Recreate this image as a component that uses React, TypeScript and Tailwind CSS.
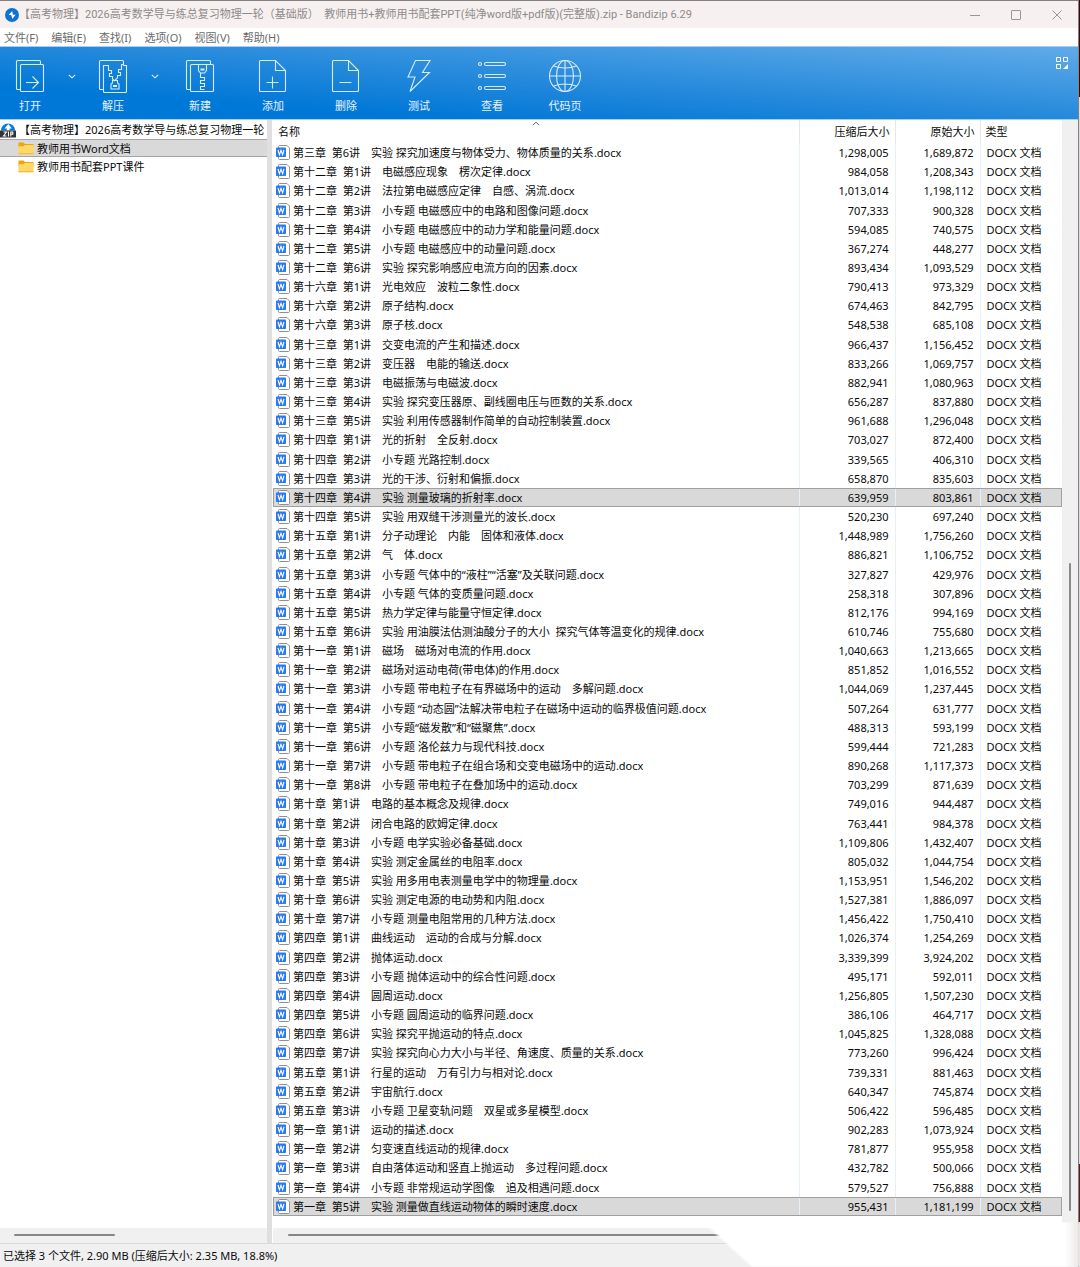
import React from "react";
import type { ReactNode } from "react";

type FileRow = [string, string, string];

const files: FileRow[] = [
  ["第三章  第6讲　实验 探究加速度与物体受力、物体质量的关系", "1,298,005", "1,689,872"],
  ["第十二章  第1讲　电磁感应现象　楞次定律", "984,058", "1,208,343"],
  ["第十二章  第2讲　法拉第电磁感应定律　自感、涡流", "1,013,014", "1,198,112"],
  ["第十二章  第3讲　小专题 电磁感应中的电路和图像问题", "707,333", "900,328"],
  ["第十二章  第4讲　小专题 电磁感应中的动力学和能量问题", "594,085", "740,575"],
  ["第十二章  第5讲　小专题 电磁感应中的动量问题", "367,274", "448,277"],
  ["第十二章  第6讲　实验 探究影响感应电流方向的因素", "893,434", "1,093,529"],
  ["第十六章  第1讲　光电效应　波粒二象性", "790,413", "973,329"],
  ["第十六章  第2讲　原子结构", "674,463", "842,795"],
  ["第十六章  第3讲　原子核", "548,538", "685,108"],
  ["第十三章  第1讲　交变电流的产生和描述", "966,437", "1,156,452"],
  ["第十三章  第2讲　变压器　电能的输送", "833,266", "1,069,757"],
  ["第十三章  第3讲　电磁振荡与电磁波", "882,941", "1,080,963"],
  ["第十三章  第4讲　实验 探究变压器原、副线圈电压与匝数的关系", "656,287", "837,880"],
  ["第十三章  第5讲　实验 利用传感器制作简单的自动控制装置", "961,688", "1,296,048"],
  ["第十四章  第1讲　光的折射　全反射", "703,027", "872,400"],
  ["第十四章  第2讲　小专题 光路控制", "339,565", "406,310"],
  ["第十四章  第3讲　光的干涉、衍射和偏振", "658,870", "835,603"],
  ["第十四章  第4讲　实验 测量玻璃的折射率", "639,959", "803,861"],
  ["第十四章  第5讲　实验 用双缝干涉测量光的波长", "520,230", "697,240"],
  ["第十五章  第1讲　分子动理论　内能　固体和液体", "1,448,989", "1,756,260"],
  ["第十五章  第2讲　气　体", "886,821", "1,106,752"],
  ["第十五章  第3讲　小专题 气体中的“液柱”“活塞”及关联问题", "327,827", "429,976"],
  ["第十五章  第4讲　小专题 气体的变质量问题", "258,318", "307,896"],
  ["第十五章  第5讲　热力学定律与能量守恒定律", "812,176", "994,169"],
  ["第十五章  第6讲　实验 用油膜法估测油酸分子的大小  探究气体等温变化的规律", "610,746", "755,680"],
  ["第十一章  第1讲　磁场　磁场对电流的作用", "1,040,663", "1,213,665"],
  ["第十一章  第2讲　磁场对运动电荷(带电体)的作用", "851,852", "1,016,552"],
  ["第十一章  第3讲　小专题 带电粒子在有界磁场中的运动　多解问题", "1,044,069", "1,237,445"],
  ["第十一章  第4讲　小专题 “动态圆”法解决带电粒子在磁场中运动的临界极值问题", "507,264", "631,777"],
  ["第十一章  第5讲　小专题“磁发散”和“磁聚焦”", "488,313", "593,199"],
  ["第十一章  第6讲　小专题 洛伦兹力与现代科技", "599,444", "721,283"],
  ["第十一章  第7讲　小专题 带电粒子在组合场和交变电磁场中的运动", "890,268", "1,117,373"],
  ["第十一章  第8讲　小专题 带电粒子在叠加场中的运动", "703,299", "871,639"],
  ["第十章  第1讲　电路的基本概念及规律", "749,016", "944,487"],
  ["第十章  第2讲　闭合电路的欧姆定律", "763,441", "984,378"],
  ["第十章  第3讲　小专题 电学实验必备基础", "1,109,806", "1,432,407"],
  ["第十章  第4讲　实验 测定金属丝的电阻率", "805,032", "1,044,754"],
  ["第十章  第5讲　实验 用多用电表测量电学中的物理量", "1,153,951", "1,546,202"],
  ["第十章  第6讲　实验 测定电源的电动势和内阻", "1,527,381", "1,886,097"],
  ["第十章  第7讲　小专题 测量电阻常用的几种方法", "1,456,422", "1,750,410"],
  ["第四章  第1讲　曲线运动　运动的合成与分解", "1,026,374", "1,254,269"],
  ["第四章  第2讲　抛体运动", "3,339,399", "3,924,202"],
  ["第四章  第3讲　小专题 抛体运动中的综合性问题", "495,171", "592,011"],
  ["第四章  第4讲　圆周运动", "1,256,805", "1,507,230"],
  ["第四章  第5讲　小专题 圆周运动的临界问题", "386,106", "464,717"],
  ["第四章  第6讲　实验 探究平抛运动的特点", "1,045,825", "1,328,088"],
  ["第四章  第7讲　实验 探究向心力大小与半径、角速度、质量的关系", "773,260", "996,424"],
  ["第五章  第1讲　行星的运动　万有引力与相对论", "739,331", "881,463"],
  ["第五章  第2讲　宇宙航行", "640,347", "745,874"],
  ["第五章  第3讲　小专题 卫星变轨问题　双星或多星模型", "506,422", "596,485"],
  ["第一章  第1讲　运动的描述", "902,283", "1,073,924"],
  ["第一章  第2讲　匀变速直线运动的规律", "781,877", "955,958"],
  ["第一章  第3讲　自由落体运动和竖直上抛运动　多过程问题", "432,782", "500,066"],
  ["第一章  第4讲　小专题 非常规运动学图像　追及相遇问题", "579,527", "756,888"],
  ["第一章  第5讲　实验 测量做直线运动物体的瞬时速度", "955,431", "1,181,199"],
];

const selectedRows = [18, 55];

function AppIcon() {
  return (
    <svg className="size-[14px] shrink-0" viewBox="0 0 14 14" aria-hidden="true">
      <circle cx="7" cy="7" r="7" fill="#0c73d3" />
      <path d="M7.200 3 3.600 7h2.600l1.200 4 3.200-4.200H7.900z" fill="#fff" />
    </svg>
  );
}

function ZipIcon() {
  return (
    <svg className="h-[16px] w-[16px] shrink-0" viewBox="0 0 16 16" aria-hidden="true">
      <path d="M1 8.500a7 7 0 1 1 14 0z" fill="#0c78da" />
      <path d="m8.400 2-4 4.400h2.400v2h2.800v-2h2.200z" fill="#fff" />
      <rect y="8.500" width="16" height="7" fill="#333" />
      <path d="M3.500 10h3l-3 4h3M8.500 9.600v4.800M10.800 14.400V10h2v2.200h-2" fill="none" stroke="#fff" strokeWidth="1.1" />
    </svg>
  );
}

function FolderIcon() {
  return (
    <svg className="h-[13px] w-[16px] shrink-0" viewBox="0 0 16 13" aria-hidden="true">
      <path d="M1.200.5h4.300L7 2h7.600c.6 0 1 .4 1 1v3H.4V1.500c0-.6.3-1 .8-1z" fill="#eba70f" />
      <path d="M.4 4.200h5L6.800 3h7.800c.6 0 1 .4 1 1v7.200c0 .6-.4 1-1 1H1.400c-.6 0-1-.4-1-1z" fill="#ffd867" />
      <path d="M.4 11v.4c0 .5.4.9 1 .9h13.200c.6 0 1-.4 1-.9V11z" fill="#f5bf3b" />
    </svg>
  );
}

function WordIcon() {
  return (
    <svg className="h-[15px] w-[14px] shrink-0" viewBox="0 0 14 15" aria-hidden="true">
      <path d="M2.500 1.500c0-.6.4-1 1-1h7.500l2.500 2.500v10.500c0 .6-.4 1-1 1h-9c-.6 0-1-.4-1-1z" fill="#fff" stroke="#909090" />
      <rect x="0" y="2.500" width="10" height="9.500" rx=".8" fill="#2b79ee" />
      <path d="m2 4.800 1.400 5L5 5.400l1.600 4.400 1.400-5" fill="none" stroke="#fff" strokeWidth="1.1" />
    </svg>
  );
}

function Glyph({ children }: { children: ReactNode }) {
  return (
    <svg className="size-[34px]" viewBox="0 0 34 34" fill="none" stroke="#d8ebfb" strokeWidth="1.1" aria-hidden="true">
      {children}
    </svg>
  );
}

const stackedPages = (
  <>
    <path d="M7.500 30.500H4.500a1 1 0 0 1-1-1v-27a1 1 0 0 1 1-1h22a1 1 0 0 1 1 1v2.500" />
    <rect x="7.500" y="5.500" width="23" height="27" rx="1" />
  </>
);

const tools: { label: string; group: string; arrow?: boolean; icon: ReactNode }[] = [
  {
    label: "打开",
    group: "flex w-[83px]",
    arrow: true,
    icon: (
      <>
        {stackedPages}
        <path d="M13 23.500h12M19.500 17.500l6 6-6 6" />
      </>
    ),
  },
  {
    label: "解压",
    group: "flex w-[87px]",
    arrow: true,
    icon: (
      <>
        <path d="M7.500 30.500H4.500a1 1 0 0 1-1-1v-27a1 1 0 0 1 1-1h22a1 1 0 0 1 1 1v4h3v26a1 1 0 0 1-1 1h-21a1 1 0 0 1-1-1v-26h5v5h3v3h-2v3h3v2.500l2.500 2" />
        <path d="M27.500 5.500h-2v5h-3v3h2v3h-3v2.500l-2.500 2" />
        <path d="M16.500 21.500h5v2.500l1.500 1v5h-8v-5l1.500-1zM17.500 26.500h3v1h-3z" />
      </>
    ),
  },
  {
    label: "新建",
    group: "flex w-[73px]",
    icon: (
      <>
        {stackedPages}
        <path d="M15.500 5.500v6l2 2.500h4l2-2.500v-6M18 10h3v1h-3z" />
        <path d="M17.500 14v4.500h4v3h-4v3h4v3h-4v3h4" />
      </>
    ),
  },
  {
    label: "添加",
    group: "flex w-[73px]",
    icon: (
      <>
        <path d="M4.500 1.500h15l10 10v20a1 1 0 0 1-1 1h-24a1 1 0 0 1-1-1v-29a1 1 0 0 1 1-1z" />
        <path d="M19.500 1.500v10h10M16.500 17.500v12M10.500 23.500h12" />
      </>
    ),
  },
  {
    label: "删除",
    group: "flex w-[73px]",
    icon: (
      <>
        <path d="M4.500 1.500h15l10 10v20a1 1 0 0 1-1 1h-24a1 1 0 0 1-1-1v-29a1 1 0 0 1 1-1z" />
        <path d="M19.500 1.500v10h10M10.500 23.500h12" />
      </>
    ),
  },
  {
    label: "测试",
    group: "flex w-[73px]",
    icon: <path d="M13.500 1.500h14.500l-7.500 12h7L8 32.500l5-14.500H6z" />,
  },
  {
    label: "查看",
    group: "flex w-[73px]",
    icon: (
      <>
        <circle cx="5" cy="5" r="1.500" />
        <circle cx="5" cy="17" r="1.500" />
        <circle cx="5" cy="29" r="1.500" />
        <rect x="9.500" y="3.500" width="21" height="3" rx="1.500" />
        <rect x="9.500" y="15.500" width="21" height="3" rx="1.500" />
        <rect x="9.500" y="27.500" width="21" height="3" rx="1.500" />
      </>
    ),
  },
  {
    label: "代码页",
    group: "flex w-[73px]",
    icon: (
      <>
        <circle cx="17" cy="17" r="15.500" />
        <ellipse cx="17" cy="17" rx="8.500" ry="15.500" />
        <path d="M17 1.500v31M1.500 17h31M5.500 7q11.500 4 23 0M5.500 27q11.500-4 23 0" />
      </>
    ),
  },
];

function Chevron() {
  return (
    <svg className="h-[5px] w-[8px]" viewBox="0 0 8 5" fill="none" stroke="#e8f3fc" strokeWidth="1.1" aria-hidden="true">
      <path d="m.8.8 3.200 3 3.200-3" />
    </svg>
  );
}

function TitleBar() {
  return (
    <header className="flex h-[27px] items-center bg-[#f6f0f0] pl-[5px]">
      <AppIcon />
      <h1 className="flex-1 font-[Roboto,'Noto_Sans_CJK_SC',sans-serif] text-[11px] leading-[16px] whitespace-pre text-[#8e8b8b]">
        {"【高考物理】2026高考数学导与练总复习物理一轮（基础版）  教师用书+教师用书配套PPT(纯净word版+pdf版)(完整版).zip - Bandizip 6.29"}
      </h1>
      <div className="flex text-[#9a9696]">
        <button type="button" aria-label="最小化" className="flex w-[41px] justify-center">
          <svg className="size-[10px]" viewBox="0 0 10 10" stroke="currentColor" fill="none">
            <path d="M0 5.500h10" />
          </svg>
        </button>
        <button type="button" aria-label="最大化" className="flex w-[41px] justify-center">
          <svg className="size-[10px]" viewBox="0 0 10 10" stroke="currentColor" fill="none">
            <rect x=".5" y=".5" width="9" height="9" rx=".5" />
          </svg>
        </button>
        <button type="button" aria-label="关闭" className="flex w-[42px] justify-center">
          <svg className="size-[10px]" viewBox="0 0 10 10" stroke="currentColor" fill="none">
            <path d="m.5.5 9 9M9.500.5l-9 9" />
          </svg>
        </button>
      </div>
    </header>
  );
}

function Toolbar() {
  return (
    <div className="flex h-[74px] items-start border-y border-[#a9cdec] bg-[linear-gradient(184deg,#60abe8_0%,#2388db_50%,#0078d7_78%)] text-white">
      {tools.map((t) => (
        <div key={t.label} className={t.group}>
          <button type="button" className="flex w-[60px] flex-col items-center gap-[6px] pt-[12px]">
            <Glyph>{t.icon}</Glyph>
            <span className="text-[11px] leading-[14px] text-[#e6f2fc]">{t.label}</span>
          </button>
          {t.arrow && (
            <button type="button" aria-label={`${t.label}选项`} className="flex h-[58px] w-[23px] items-center justify-center">
              <Chevron />
            </button>
          )}
        </div>
      ))}
      <button type="button" aria-label="布局" className="mt-[10px] mr-[10px] ml-auto">
        <svg className="size-[12px]" viewBox="0 0 12 12" fill="none" stroke="#fff" aria-hidden="true">
          <path d="M.5.5h4v4h-4zM7.500.5h4v4h-4zM.5 7.500h4v4h-4z" />
          <path d="M12 7v5H7z" fill="#fff" stroke="none" />
        </svg>
      </button>
    </div>
  );
}

function FileTable() {
  return (
    <table className="w-full grow table-fixed border-collapse text-[11px] leading-[17px]">
      <colgroup>
        <col />
        <col className="w-[96px]" />
        <col className="w-[85px]" />
        <col className="w-[82px]" />
      </colgroup>
      <thead>
        <tr className="h-[23px] text-left">
          <th className="relative pl-[5px] font-normal">
            名称
            <span className="absolute inset-x-0 top-px flex justify-center">
              <svg className="h-[5px] w-[8px]" viewBox="0 0 8 5" fill="none" stroke="#666" aria-hidden="true">
                <path d="m.8 4.200 3.200-3 3.200 3" />
              </svg>
            </span>
          </th>
          <th className="border-l border-[#e4e8ec] pr-[5px] text-right font-normal">压缩后大小</th>
          <th className="border-l border-[#e4e8ec] pr-[5px] text-right font-normal">原始大小</th>
          <th className="border-l border-[#e4e8ec] pl-[5px] font-normal">类型</th>
        </tr>
      </thead>
      <tbody>
        {files.map(([name, packed, original], i) => (
          <tr key={name} className={selectedRows.includes(i) ? "bg-[#d9d9d9] outline outline-1 -outline-offset-1 outline-[#a0a0a0]" : ""}>
            <td className="p-0">
              <div className="flex items-center gap-[3px] pl-[3px] whitespace-pre">
                <WordIcon />
                <span>{name}.docx</span>
              </div>
            </td>
            <td className="border-l border-[#e6f0f9] py-0 pr-[6px] text-right">{packed}</td>
            <td className="border-l border-[#e6f0f9] py-0 pr-[6px] text-right">{original}</td>
            <td className="border-l border-[#e6f0f9] py-0 pl-[6px]">DOCX 文档</td>
          </tr>
        ))}
      </tbody>
    </table>
  );
}

export default function App() {
  return (
    <div className="relative flex min-h-screen bg-white font-['Noto_Sans','Noto_Sans_CJK_SC',sans-serif] text-[#0a0a0a]">
      <div className="flex min-w-0 flex-1 flex-col border-t border-r border-[#858080]">
        <TitleBar />
        <nav className="flex h-[18px] items-center gap-[13px] pl-1 text-[11px] leading-[17px] text-[#6b6b6b]">
          {["文件(F)", "编辑(E)", "查找(I)", "选项(O)", "视图(V)", "帮助(H)"].map((m) => (
            <button key={m} type="button">
              {m}
            </button>
          ))}
        </nav>
        <Toolbar />
        <main className="flex flex-1">
          <aside className="flex w-[267px] shrink-0 flex-col text-[11px] leading-[17px]">
            <div className="flex h-[19px] items-center gap-[3px] overflow-hidden whitespace-nowrap">
              <ZipIcon />
              <span>【高考物理】2026高考数学导与练总复习物理一轮</span>
            </div>
            <button type="button" className="flex h-[18px] items-center gap-[3px] border-y border-[#a6a6a6] bg-[#d9d9d9] pl-[18px]">
              <FolderIcon />
              教师用书Word文档
            </button>
            <button type="button" className="flex h-[19px] items-center gap-[3px] pl-[18px]">
              <FolderIcon />
              教师用书配套PPT课件
            </button>
            <div className="mt-auto h-[15px] bg-[#f0f0f0] px-[14px] pt-[6px]">
              <div className="h-[2px] w-[101px] rounded bg-[#868686]" />
            </div>
          </aside>
          <div className="w-[5px] bg-[#dfdfdf]" />
          <section className="flex min-w-0 flex-1 flex-col pl-px">
            <div className="flex flex-1">
              <div className="flex min-w-0 flex-1 flex-col pb-[12px]">
                <FileTable />
              </div>
              <div className="flex w-[16px] flex-col items-center bg-[#f0f0f0] pb-[17px]">
                <div className="mt-auto h-[648px] w-[2px] rounded bg-[#8a8a8a]" />
              </div>
            </div>
            <div className="h-[15px] bg-[#f0f0f0] pt-[6px] pr-[150px] pl-[15px]">
              <div className="h-[2px] rounded bg-[#868686]" />
            </div>
          </section>
        </main>
        <footer className="flex h-[24px] items-center border-t border-[#d9d9d9] bg-[#f0f0f0] pl-[3px] text-[11px] leading-[17px]">
          已选择 3 个文件, 2.90 MB (压缩后大小: 2.35 MB, 18.8%)
        </footer>
      </div>
      <div className="flex w-px flex-col justify-between bg-[#d8dade] pb-[45px]">
        <div className="h-[97px] bg-[#3c0710]" />
        <div className="h-[58px] bg-[#5c1a20]" />
      </div>
      <div className="absolute right-0 bottom-0 h-[45px] w-[372px] overflow-hidden">
        <div className="h-full blur-[1px]">
          <div className="h-full bg-[linear-gradient(90deg,#fff_96%,#ece6e6)] [clip-path:polygon(0_0,100%_0,100%_100%,44px_100%,8px_12px,2px_6px)]" />
        </div>
      </div>
    </div>
  );
}
